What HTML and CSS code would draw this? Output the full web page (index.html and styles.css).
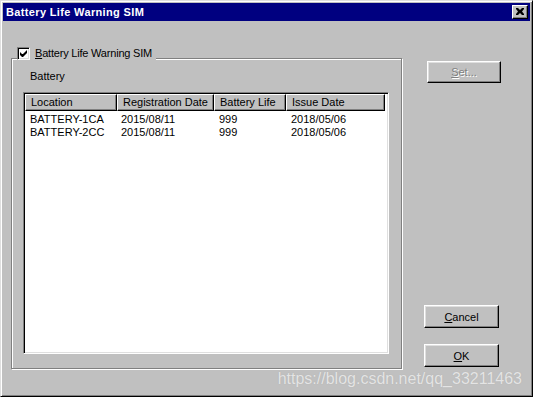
FILE: index.html
```html
<!DOCTYPE html>
<html>
<head>
<meta charset="utf-8">
<link rel="stylesheet" href="styles.css">
</head>
<body>
<div class="window">
  <div class="titlebar">
    <span class="title">Battery Life Warning SIM</span>
    <span class="close"><svg width="8" height="7" viewBox="0 0 8 7"><path d="M0 0h2l2 2 2-2h2v1l-2 2.5 2 2.5v1h-2l-2-2-2 2h-2v-1l2-2.5-2-2.5z" fill="#000"/></svg></span>
  </div>
  <div class="content">
    <div class="group">
      <div class="legend">
        <span class="checkbox"><svg width="7" height="7" viewBox="0 0 7 7"><path d="M0 2v3l2 2h1l4-4v-3l-4 4h-1z" fill="#000"/></svg></span>
        <span class="legend-text"><u>B</u>attery Life Warning SIM</span>
      </div>
      <div class="sublabel">Battery</div>
      <div class="listview">
        <div class="header">
          <div class="hcell c1">Location</div>
          <div class="hcell c2">Registration Date</div>
          <div class="hcell c3">Battery Life</div>
          <div class="hcell c4">Issue Date</div>
        </div>
        <div class="row">
          <div class="cell c1">BATTERY-1CA</div>
          <div class="cell c2">2015/08/11</div>
          <div class="cell c3">999</div>
          <div class="cell c4">2018/05/06</div>
        </div>
        <div class="row">
          <div class="cell c1">BATTERY-2CC</div>
          <div class="cell c2">2015/08/11</div>
          <div class="cell c3">999</div>
          <div class="cell c4">2018/05/06</div>
        </div>
      </div>
    </div>
    <div class="side">
      <button class="btn btn-set" disabled><u>S</u>et...</button>
      <button class="btn btn-cancel"><u>C</u>ancel</button>
      <button class="btn btn-ok"><u>O</u>K</button>
    </div>
  </div>
  <div class="watermark">https://blog.csdn.net/qq_33211463</div>
</div>
</body>
</html>
```
FILE: styles.css
```css
html, body {
  margin: 0;
  padding: 0;
  background: #c0c0c0;
}
.window {
  position: relative;
  width: 533px;
  height: 397px;
  box-sizing: border-box;
  border: 1px solid;
  border-color: #dfdfdf #000 #000 #dfdfdf;
  box-shadow: inset 1px 1px 0 #fff, inset -1px -1px 0 #808080;
  padding: 2px;
  background: #c0c0c0;
  font-family: "Liberation Sans", Arial, sans-serif;
  font-size: 11px;
  color: #000;
  display: flex;
  flex-direction: column;
}
.titlebar {
  height: 18px;
  background: #000080;
  color: #fff;
  display: flex;
  align-items: center;
  justify-content: space-between;
  padding: 0 2px 0 3px;
}
.title {
  font-weight: bold;
  font-size: 11px;
  letter-spacing: 0.35px;
}
.close {
  width: 16px;
  height: 14px;
  box-sizing: border-box;
  background: #c0c0c0;
  border: 1px solid;
  border-color: #fff #000 #000 #fff;
  box-shadow: inset -1px -1px 0 #808080;
  display: flex;
  align-items: center;
  justify-content: center;
  padding: 0 1px 1px 0;
}
.content {
  flex: 1;
  display: flex;
  padding-left: 8px;
}
.group {
  position: relative;
  margin-top: 37px;
  width: 391px;
  height: 311px;
  box-sizing: border-box;
  border: 1px solid #808080;
  box-shadow: inset 1px 1px 0 #fff, 1px 1px 0 #fff;
  padding: 11px 0 0 11px;
}
.legend {
  position: absolute;
  top: -12px;
  left: 5px;
  display: flex;
  align-items: center;
  gap: 5px;
  background: #c0c0c0;
  padding-right: 4px;
  height: 13px;
}
.checkbox {
  width: 13px;
  height: 13px;
  box-sizing: border-box;
  background: #fff;
  border: 1px solid;
  border-color: #808080 #fff #fff #808080;
  box-shadow: inset 1px 1px 0 #000, inset -1px -1px 0 #dfdfdf;
  display: flex;
  align-items: center;
  justify-content: center;
}
.legend-text {
  line-height: 13px;
  letter-spacing: -0.2px;
}
.sublabel {
  margin-left: 7px;
  line-height: 13px;
  height: 22px;
}
.listview {
  width: 366px;
  height: 262px;
  box-sizing: border-box;
  border: 1px solid;
  border-color: #808080 #fff #fff #808080;
  box-shadow: inset 1px 1px 0 #000, inset -1px -1px 0 #dfdfdf;
  background: #fff;
  padding: 1px;
}
.header {
  display: flex;
  height: 17px;
}
.hcell {
  box-sizing: border-box;
  height: 17px;
  background: #c0c0c0;
  border: 1px solid;
  border-color: #fff #000 #000 #fff;
  box-shadow: inset -1px -1px 0 #808080;
  padding-left: 5px;
  line-height: 14px;
  white-space: nowrap;
  overflow: hidden;
}
.c1 { width: 92px; }
.c2 { width: 97px; }
.c3 { width: 72px; }
.c4 { width: 99px; }
.row {
  display: flex;
  height: 13px;
}
.header + .row { margin-top: 2px; }
.cell {
  box-sizing: border-box;
  padding-left: 5px;
  line-height: 13px;
  white-space: nowrap;
}
.row .c2 { padding-left: 4px; }
.side {
  display: flex;
  flex-direction: column;
  align-items: flex-start;
}
.btn {
  font-family: "Liberation Sans", Arial, sans-serif;
  font-size: 11px;
  color: #000;
  background: #c0c0c0;
  border: 1px solid;
  border-color: #fff #000 #000 #fff;
  box-shadow: inset -1px -1px 0 #808080, inset 1px 1px 0 #dfdfdf;
  padding: 0;
  margin: 0;
  box-sizing: border-box;
}
.btn-set {
  width: 74px;
  height: 22px;
  margin-top: 40px;
  margin-left: 25px;
  color: #808080;
  text-shadow: 1px 1px 0 #fff;
}
.btn-cancel {
  width: 75px;
  height: 23px;
  margin-top: 222px;
  margin-left: 22px;
}
.btn-ok {
  width: 75px;
  height: 23px;
  margin-top: 16px;
  margin-left: 22px;
}
.watermark {
  position: absolute;
  right: 10px;
  bottom: 8px;
  font-family: "Liberation Sans", Arial, sans-serif;
  font-size: 16px;
  color: #e4e4e4;
  text-shadow: 0 0 1px #a8a8a8;
}
```
